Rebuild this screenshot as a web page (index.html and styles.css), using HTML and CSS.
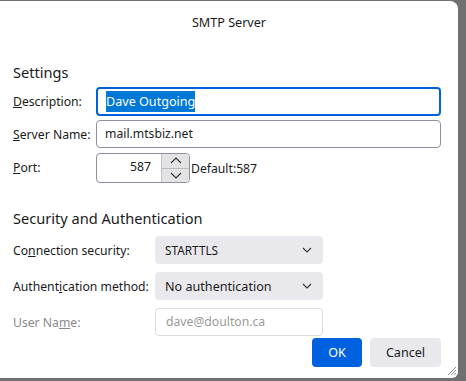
FILE: index.html
```html
<!DOCTYPE html>
<html>
<head>
	<meta charset="UTF-8">
	<title>SMTP Server</title>
	<link rel="stylesheet" href="styles.css">
</head>
<body>
	<div id="dialog">
		<div class="title">SMTP Server</div>

		<h2>Settings</h2>
		<div class="form settings">
			<label><u>D</u>escription:</label>
			<div class="field focused"><span class="selected">Dave Outgoing</span></div>

			<label><u>S</u>erver Name:</label>
			<div class="field">mail.mtsbiz.net</div>

			<label><u>P</u>ort:</label>
			<div class="port_row">
				<div class="field port">
					<span class="port_value">587</span>
					<div class="spinner">
						<div class="spin up">
							<svg width="12" height="7" viewBox="0 0 12 7"><path d="M1 6 L6 1 L11 6" fill="none" stroke="#333" stroke-width="1.1"/></svg>
						</div>
						<div class="spin down">
							<svg width="12" height="7" viewBox="0 0 12 7"><path d="M1 1 L6 6 L11 1" fill="none" stroke="#333" stroke-width="1.1"/></svg>
						</div>
					</div>
				</div>
				<span class="default">Default:587</span>
			</div>
		</div>

		<h2 class="security_title">Security and Authentication</h2>
		<div class="form security">
			<label>Co<u>n</u>nection security:</label>
			<div class="select">STARTTLS
				<svg width="10" height="6" viewBox="0 0 10 6"><path d="M1 1 L5 5 L9 1" fill="none" stroke="#333" stroke-width="1.1"/></svg>
			</div>

			<label>Authent<u>i</u>cation method:</label>
			<div class="select big">No authentication
				<svg width="10" height="6" viewBox="0 0 10 6"><path d="M1 1 L5 5 L9 1" fill="none" stroke="#333" stroke-width="1.1"/></svg>
			</div>

			<label class="disabled">User Na<u>m</u>e:</label>
			<div class="field disabled_field">dave@doulton.ca</div>
		</div>

		<div class="buttons">
			<button class="ok">OK</button>
			<button class="cancel">Cancel</button>
		</div>

		<svg class="grip" width="10" height="10" viewBox="0 0 10 10">
			<path d="M9 1 L1 9 M9 4 L4 9 M9 7 L7 9" stroke="#888" stroke-width="1"/>
		</svg>
	</div>
</body>
</html>
```

FILE: styles.css
```css
body {
	margin: 0;
	padding-top: 1px;
	background: #707070;
	height: 381px;
	box-sizing: border-box;
	overflow: hidden;
	font-family: "Noto Sans", "Open Sans", sans-serif;
	font-size: 12.2px;
	color: #1a1a1a;
}

#dialog {
	position: relative;
	width: 458px;
	height: 377px;
	background: #fff;
	border-top-right-radius: 8px;
	border-bottom-right-radius: 6px;
	box-sizing: border-box;
	padding: 0 17px 0 13px;
}

.title {
	height: 43px;
	line-height: 43px;
	text-align: center;
	font-size: 12.6px;
	padding-left: 4px;
}

h2 {
	margin: 18px 0 5px 0;
	font-size: 14.6px;
	font-weight: normal;
	line-height: 20px;
}

.security_title {
	margin-top: 25px;
	margin-bottom: 8px;
}

.form {
	display: grid;
	align-items: center;
}

.settings {
	grid-template-columns: 83px 1fr;
	row-gap: 4px;
}

.security {
	grid-template-columns: 142px 168px;
	row-gap: 8px;
}

label {
	white-space: nowrap;
}

.disabled {
	color: #8a8a8a;
}

.field {
	height: 28px;
	border: 1px solid #8f8f9d;
	border-radius: 4px;
	box-sizing: border-box;
	padding: 0 8px;
	line-height: 26px;
	white-space: nowrap;
}

.focused {
	height: 29px;
	border: 2px solid #0061e0;
	line-height: 25px;
	font-size: 12.6px;
}

.selected {
	background: #0078d7;
	color: #fff;
	padding: 2px 0;
}

.port_row {
	display: flex;
	align-items: center;
	margin-top: 1px;
}

.field.port {
	width: 94px;
	height: 30px;
	display: flex;
	padding: 0 0 0 8px;
}

.port_value {
	flex: 1;
	text-align: right;
	padding-right: 10px;
}

.spinner {
	width: 27px;
	display: flex;
	flex-direction: column;
	border-left: 1px solid #c4c4c4;
	border-radius: 0 3px 3px 0;
	overflow: hidden;
}

.spin {
	flex: 1;
	background: #e3e3e6;
	display: flex;
	align-items: center;
	justify-content: center;
}

.spin.up {
	border-bottom: 1px solid #bcbcbc;
}

.default {
	padding-left: 1px;
}

.select {
	height: 28px;
	background: #e9e9ed;
	border-radius: 4px;
	display: flex;
	align-items: center;
	justify-content: space-between;
	padding: 0 11px 0 10px;
	font-size: 11.8px;
}

.select.big {
	font-size: 12.6px;
}

.disabled_field {
	border-color: #dcdce2;
	color: #9a9a9a;
	padding-left: 10px;
}

.buttons {
	display: flex;
	justify-content: flex-end;
	gap: 8px;
	margin-top: 2px;
}

button {
	height: 29px;
	border: none;
	border-radius: 4px;
	font-family: "Noto Sans", "Open Sans", sans-serif;
	font-size: 12.6px;
}

.ok {
	width: 50px;
	background: #0061e0;
	color: #fff;
}

.cancel {
	width: 71px;
	background: #e9e9ed;
	color: #1a1a1a;
}

.grip {
	position: absolute;
	right: 1px;
	bottom: 2px;
}
```
